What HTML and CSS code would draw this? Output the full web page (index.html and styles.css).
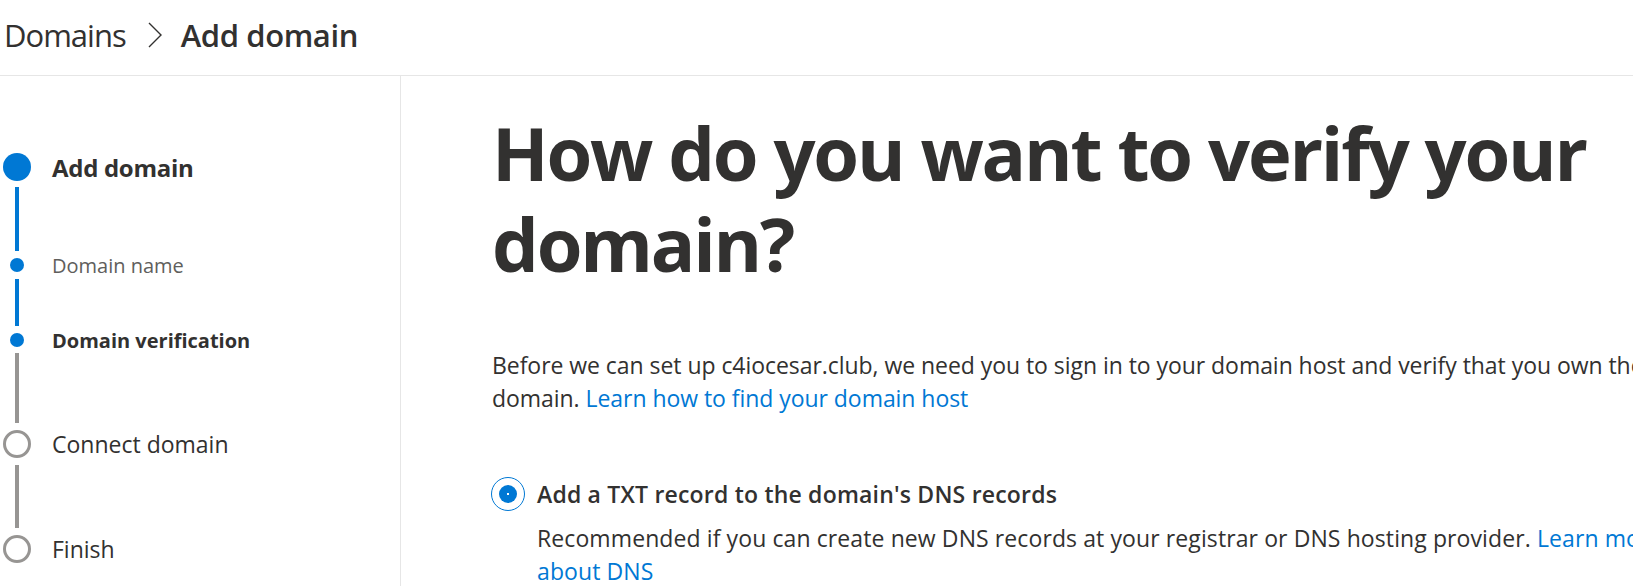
FILE: index.html
```html
<!DOCTYPE html>
<html lang="en">
<head>
<meta charset="utf-8">
<title>Add domain</title>
<link rel="stylesheet" href="styles.css">
</head>
<body>
<header class="topbar">
  <nav class="crumbs">
    <span class="crumb">Domains</span>
    <svg class="chev" width="16" height="26" viewBox="0 0 16 26"><polyline points="2,1 14,13 2,25" fill="none" stroke="#323130" stroke-width="1.4"/></svg>
    <span class="crumb current">Add domain</span>
  </nav>
</header>
<div class="layout">
  <aside class="steps">
    <div class="step">
      <span class="marker big done"></span>
      <span class="label main strong">Add domain</span>
    </div>
    <div class="bar blue b1"></div>
    <div class="step small">
      <span class="marker dot"></span>
      <span class="label sub muted">Domain name</span>
    </div>
    <div class="bar blue b2"></div>
    <div class="step small">
      <span class="marker dot"></span>
      <span class="label sub strong">Domain verification</span>
    </div>
    <div class="bar grey b3"></div>
    <div class="step">
      <span class="marker big open"></span>
      <span class="label main">Connect domain</span>
    </div>
    <div class="bar grey b4"></div>
    <div class="step">
      <span class="marker big open"></span>
      <span class="label main">Finish</span>
    </div>
  </aside>
  <main class="content">
    <h1 class="title">How do you want to verify your domain?</h1>
    <p class="intro">Before we can set up c4iocesar.club, we need you to sign in to your domain host and verify that you own the domain. <a href="#">Learn how to find your domain host</a></p>
    <div class="option">
      <div class="option-head">
        <span class="radio"><span class="radio-fill"></span></span>
        <span class="option-title">Add a TXT record to the domain's DNS records</span>
      </div>
      <p class="option-desc">Recommended if you can create new DNS records at your registrar or DNS hosting provider. <a href="#">Learn more about DNS</a></p>
    </div>
  </main>
</div>
</body>
</html>
```
FILE: styles.css
```css
html, body {
  margin: 0;
  padding: 0;
  background: #ffffff;
}
body {
  width: 1633px;
  height: 586px;
  overflow: hidden;
  font-family: "Open Sans", "Noto Sans", sans-serif;
  color: #323130;
}
.topbar {
  height: 75px;
  border-bottom: 1px solid #e6e6e6;
}
.crumbs {
  display: flex;
  align-items: center;
  padding: 13px 0 0 4px;
  height: 44px;
}
.crumb {
  font-size: 31px;
  line-height: 44px;
  letter-spacing: -1px;
  color: #323130;
}
.crumb.current {
  font-weight: 600;
  letter-spacing: -0.4px;
}
.chev {
  flex: none;
  margin: 0 18px 0 21px;
}
.layout {
  display: flex;
  height: 510px;
}
.steps {
  flex: none;
  width: 401px;
  box-sizing: border-box;
  border-right: 1px solid #e6e6e6;
  padding: 77px 0 0 3px;
  display: flex;
  flex-direction: column;
}
.step {
  display: flex;
  align-items: center;
  height: 28px;
  flex: none;
}
.step.small { height: 14px; }
.marker {
  flex: none;
  width: 28px;
  box-sizing: border-box;
  border-radius: 50%;
}
.marker.big { height: 28px; }
.marker.done { background: #0078d4; }
.marker.open { border: 3px solid #979593; }
.marker.dot {
  width: 14px;
  height: 14px;
  margin: 0 7px;
  background: #0078d4;
}
.label {
  margin-left: 21px;
  white-space: nowrap;
}
.label.main { font-size: 23px; }
.label.main.strong { font-size: 24px; font-weight: 700; letter-spacing: -0.3px; }
.label.sub { font-size: 20px; }
.label.sub.strong { font-weight: 700; }
.label.muted { color: #605e5c; }
.bar {
  flex: none;
  width: 4px;
  margin-left: 12px;
}
.bar.blue { background: #0078d4; }
.bar.grey { background: #979593; }
.b1 { height: 64px; margin-top: 6px; margin-bottom: 7px; }
.b2 { height: 47px; margin-top: 7px; margin-bottom: 7px; }
.b3 { height: 70px; margin-top: 6px; margin-bottom: 7px; }
.b4 { height: 63px; margin-top: 7px; margin-bottom: 7px; }
.content {
  flex: none;
  width: 1185px;
  padding-left: 91px;
}
.title {
  margin: 31px 0 0;
  font-size: 74px;
  line-height: 91px;
  font-weight: 700;
  letter-spacing: -2.2px;
}
.intro {
  margin: 60px 0 0;
  font-size: 23px;
  line-height: 33px;
  letter-spacing: -0.05px;
}
a {
  color: #0078d4;
  text-decoration: none;
}
.option {
  margin-top: 62px;
}
.option-head {
  display: flex;
  align-items: center;
  gap: 12px;
  margin-left: -1px;
}
.radio {
  flex: none;
  width: 34px;
  height: 34px;
  box-sizing: border-box;
  border: 1px solid #0078d4;
  border-radius: 50%;
  display: flex;
  align-items: center;
  justify-content: center;
}
.radio-fill {
  width: 18px;
  height: 18px;
  border-radius: 50%;
  background: #0078d4;
  position: relative;
}
.radio-fill::after {
  content: "";
  position: absolute;
  left: 8px;
  top: 8px;
  width: 2px;
  height: 2px;
  background: #ffffff;
}
.option-title {
  font-size: 23px;
  line-height: 34px;
  font-weight: 600;
  letter-spacing: 0.2px;
}
.option-desc {
  margin: 11px 0 0 45px;
  font-size: 23px;
  line-height: 33px;
  letter-spacing: 0.1px;
}
```
